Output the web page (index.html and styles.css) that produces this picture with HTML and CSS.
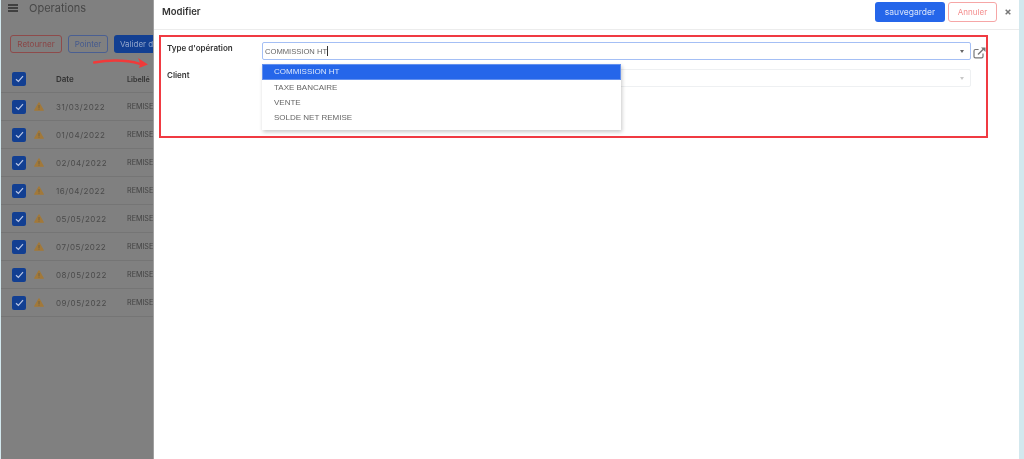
FILE: index.html
```html
<!DOCTYPE html>
<html lang="fr">
<head>
<meta charset="utf-8">
<title>Operations</title>
<link rel="stylesheet" href="styles.css">
</head>
<body>
<div class="page">
  <section class="backdrop">
    <header class="top">
      <svg class="burger" width="10" height="8" viewBox="0 0 10 8"><path d="M0 1h10M0 4h10M0 7h10" stroke="#2b2b2b" stroke-width="1.4"/></svg>
      <span class="top-title">Operations</span>
    </header>
    <div class="actions">
      <span class="btn btn-red">Retourner</span>
      <span class="btn btn-blue">Pointer</span>
      <span class="btn btn-solid">Valider d</span>
    </div>
    <div class="row row-head">
      <span class="check"><svg width="9" height="8" viewBox="0 0 9 8"><path d="M1 4.2l2.4 2.3L8 1.2" fill="none" stroke="#b9c6e6" stroke-width="1.2"/></svg></span>
      <span class="warn-slot"></span>
      <span class="date">Date</span>
      <span class="label">Libellé</span>
    </div>
    <div class="row">
      <span class="check"><svg width="9" height="8" viewBox="0 0 9 8"><path d="M1 4.2l2.4 2.3L8 1.2" fill="none" stroke="#b9c6e6" stroke-width="1.2"/></svg></span>
      <span class="warn-slot"><svg class="warn" width="10" height="9" viewBox="0 0 10 9"><path d="M5 .8L9.300 8.200H.7z" fill="#a2793a" stroke="#a2793a" stroke-width="1.200" stroke-linejoin="round"/><path d="M5 3v3M5 6.600v1" stroke="#6b5e44" stroke-width=".9"/></svg></span>
      <span class="date">31/03/2022</span><span class="label">REMISE</span>
    </div>
    <div class="row">
      <span class="check"><svg width="9" height="8" viewBox="0 0 9 8"><path d="M1 4.2l2.4 2.3L8 1.2" fill="none" stroke="#b9c6e6" stroke-width="1.2"/></svg></span>
      <span class="warn-slot"><svg class="warn" width="10" height="9" viewBox="0 0 10 9"><path d="M5 .8L9.300 8.200H.7z" fill="#a2793a" stroke="#a2793a" stroke-width="1.200" stroke-linejoin="round"/><path d="M5 3v3M5 6.600v1" stroke="#6b5e44" stroke-width=".9"/></svg></span>
      <span class="date">01/04/2022</span><span class="label">REMISE</span>
    </div>
    <div class="row">
      <span class="check"><svg width="9" height="8" viewBox="0 0 9 8"><path d="M1 4.2l2.4 2.3L8 1.2" fill="none" stroke="#b9c6e6" stroke-width="1.2"/></svg></span>
      <span class="warn-slot"><svg class="warn" width="10" height="9" viewBox="0 0 10 9"><path d="M5 .8L9.300 8.200H.7z" fill="#a2793a" stroke="#a2793a" stroke-width="1.200" stroke-linejoin="round"/><path d="M5 3v3M5 6.600v1" stroke="#6b5e44" stroke-width=".9"/></svg></span>
      <span class="date">02/04/2022</span><span class="label">REMISE</span>
    </div>
    <div class="row">
      <span class="check"><svg width="9" height="8" viewBox="0 0 9 8"><path d="M1 4.2l2.4 2.3L8 1.2" fill="none" stroke="#b9c6e6" stroke-width="1.2"/></svg></span>
      <span class="warn-slot"><svg class="warn" width="10" height="9" viewBox="0 0 10 9"><path d="M5 .8L9.300 8.200H.7z" fill="#a2793a" stroke="#a2793a" stroke-width="1.200" stroke-linejoin="round"/><path d="M5 3v3M5 6.600v1" stroke="#6b5e44" stroke-width=".9"/></svg></span>
      <span class="date">16/04/2022</span><span class="label">REMISE</span>
    </div>
    <div class="row">
      <span class="check"><svg width="9" height="8" viewBox="0 0 9 8"><path d="M1 4.2l2.4 2.3L8 1.2" fill="none" stroke="#b9c6e6" stroke-width="1.2"/></svg></span>
      <span class="warn-slot"><svg class="warn" width="10" height="9" viewBox="0 0 10 9"><path d="M5 .8L9.300 8.200H.7z" fill="#a2793a" stroke="#a2793a" stroke-width="1.200" stroke-linejoin="round"/><path d="M5 3v3M5 6.600v1" stroke="#6b5e44" stroke-width=".9"/></svg></span>
      <span class="date">05/05/2022</span><span class="label">REMISE</span>
    </div>
    <div class="row">
      <span class="check"><svg width="9" height="8" viewBox="0 0 9 8"><path d="M1 4.2l2.4 2.3L8 1.2" fill="none" stroke="#b9c6e6" stroke-width="1.2"/></svg></span>
      <span class="warn-slot"><svg class="warn" width="10" height="9" viewBox="0 0 10 9"><path d="M5 .8L9.300 8.200H.7z" fill="#a2793a" stroke="#a2793a" stroke-width="1.200" stroke-linejoin="round"/><path d="M5 3v3M5 6.600v1" stroke="#6b5e44" stroke-width=".9"/></svg></span>
      <span class="date">07/05/2022</span><span class="label">REMISE</span>
    </div>
    <div class="row">
      <span class="check"><svg width="9" height="8" viewBox="0 0 9 8"><path d="M1 4.2l2.4 2.3L8 1.2" fill="none" stroke="#b9c6e6" stroke-width="1.2"/></svg></span>
      <span class="warn-slot"><svg class="warn" width="10" height="9" viewBox="0 0 10 9"><path d="M5 .8L9.300 8.200H.7z" fill="#a2793a" stroke="#a2793a" stroke-width="1.200" stroke-linejoin="round"/><path d="M5 3v3M5 6.600v1" stroke="#6b5e44" stroke-width=".9"/></svg></span>
      <span class="date">08/05/2022</span><span class="label">REMISE</span>
    </div>
    <div class="row">
      <span class="check"><svg width="9" height="8" viewBox="0 0 9 8"><path d="M1 4.2l2.4 2.3L8 1.2" fill="none" stroke="#b9c6e6" stroke-width="1.2"/></svg></span>
      <span class="warn-slot"><svg class="warn" width="10" height="9" viewBox="0 0 10 9"><path d="M5 .8L9.300 8.200H.7z" fill="#a2793a" stroke="#a2793a" stroke-width="1.200" stroke-linejoin="round"/><path d="M5 3v3M5 6.600v1" stroke="#6b5e44" stroke-width=".9"/></svg></span>
      <span class="date">09/05/2022</span><span class="label">REMISE</span>
    </div>
  </section>

  <section class="drawer">
    <header class="drawer-head">
      <h1 class="drawer-title">Modifier</h1>
      <span class="save">sauvegarder</span>
      <span class="cancel">Annuler</span>
      <svg class="close" width="6" height="6" viewBox="0 0 6 6"><path d="M.7.7l4.600 4.600M5.300.7L.7 5.300" stroke="#777" stroke-width="1.500"/></svg>
    </header>
    <div class="highlight">
      <div class="form-labels">
        <div class="form-label">Type d'opération</div>
        <div class="form-label">Client</div>
      </div>
      <div class="form-fields">
        <div class="field-line">
          <div class="select select-open">
            <span class="select-text">COMMISSION HT</span><span class="caret-bar"></span>
            <span class="arrow"></span>
          </div>
          <svg class="ext" width="13" height="12" viewBox="0 0 13 12"><path d="M10 6.500v3a1.400 1.400 0 0 1-1.400 1.400H2.400A1.400 1.400 0 0 1 1 9.500V3.900A1.400 1.400 0 0 1 2.400 2.500h3.200" fill="none" stroke="#777" stroke-width="1.200"/><path d="M5 7.500L10.500 2" stroke="#777" stroke-width="1.400"/><path d="M8 .5h4.500V5z" fill="#777"/></svg>
        </div>
        <div class="field-line">
          <div class="select select-idle"><span class="arrow arrow-idle"></span></div>
        </div>
        <ul class="menu">
          <li class="menu-item menu-active">COMMISSION HT</li>
          <li class="menu-item">TAXE BANCAIRE</li>
          <li class="menu-item">VENTE</li>
          <li class="menu-item">SOLDE NET REMISE</li>
        </ul>
      </div>
    </div>
  </section>

  <svg class="swoosh" width="56" height="13" viewBox="0 0 56 13"><path d="M1 5.500C15 3 30 2 47 6.800" fill="none" stroke="#f03a3a" stroke-width="2.400" stroke-linecap="round"/><path d="M45 1L55 7.500L46 11C47.500 8 47 4 45 1Z" fill="#f03a3a"/></svg>
</div>
</body>
</html>
```
FILE: styles.css
```css
* { box-sizing: border-box; }
html, body { margin: 0; height: 100%; overflow: hidden; }
body { font-family: "Inter", "Liberation Sans", sans-serif; background: #d3e8ee; }
.page { position: relative; display: flex; width: 1024px; height: 459px; padding: 0 5px 0 1px; filter: blur(.35px); }

.backdrop { width: 153px; background: #808080; color: #3d3d3d; overflow: hidden; flex: none; border-right: 1px solid #a0a0a0; }
.top { display: flex; align-items: center; height: 16px; padding-left: 7px; gap: 11px; }
.top-title { font-size: 11px; color: #474747; white-space: nowrap; }
.actions { display: flex; gap: 6px; padding: 19px 0 0 9px; height: 54px; white-space: nowrap; }
.btn { flex: none; display: flex; align-items: center; justify-content: center; height: 18px; border-radius: 3px; font-size: 8px; padding: 0 6px; }
.btn-red { width: 52px; border: 1px solid #8e4b4b; color: #8a4444; }
.btn-blue { width: 40px; border: 1px solid #4a5f92; color: #43598e; }
.btn-solid { width: 60px; justify-content: flex-start; background: #123f92; color: #93a6cb; }

.row { display: flex; align-items: center; height: 28px; border-bottom: 1px solid #757575; font-size: 8px; white-space: nowrap; }
.row-head { height: 23px; padding-bottom: 4px; font-weight: 600; color: #333; }
.check { flex: none; display: flex; align-items: center; justify-content: center; width: 14px; height: 14px; margin-left: 11px; border-radius: 2px; background: #123f92; }
.warn-slot { flex: none; display: flex; justify-content: center; width: 10px; margin-left: 8px; }
.warn { display: block; flex: none; }
.date { flex: none; width: 71px; margin-left: 12px; font-size: 8px; letter-spacing: .55px; color: #4a4a4a; }
.row-head .date { letter-spacing: 0; }
.row-head .date, .row-head .label { color: #333; }
.label { font-size: 7.200px; color: #424242; }

.drawer { flex: 1; background: #fff; min-width: 0; }
.drawer-head { display: flex; align-items: center; height: 30px; padding: 0 8px 6px 8px; border-bottom: 1px solid #ececec; }
.drawer-title { flex: 1; margin: 0; font-size: 9.500px; font-weight: 600; color: #333; }
.save { display: flex; align-items: center; justify-content: center; width: 70px; height: 20px; background: #2566ea; border-radius: 3px; color: #d9e5fb; font-size: 8.500px; }
.cancel { display: flex; align-items: center; justify-content: center; width: 49px; height: 20px; margin-left: 3px; border: 1px solid #f6a6a6; border-radius: 3px; color: #f48c8c; font-size: 8px; }
.close { margin-left: 8px; }

.highlight { display: flex; width: 829px; height: 103px; margin: 5px 0 0 5px; padding: 5px 0 0 6px; border: 2px solid #f03a42; }
.form-labels { flex: none; width: 95px; font-size: 8px; font-weight: 600; color: #333; }
.form-label { height: 27px; padding-top: 1px; }
.form-fields { position: relative; width: 709px; }
.field-line { display: flex; align-items: flex-start; height: 27px; }
.select { position: relative; display: flex; align-items: center; width: 709px; height: 18px; flex: none; border-radius: 2px; background: #fff; font-family: "Liberation Sans", sans-serif; font-size: 7.600px; color: #666; padding-left: 2px; }
.select-open { border: 1px solid #a4bff5; }
.select-idle { border: 1px solid #eef0f2; }
.select-text { white-space: nowrap; }
.caret-bar { width: 1px; height: 10px; background: #333; }
.arrow { position: absolute; right: 6px; top: 7px; width: 0; height: 0; border: 2px solid transparent; border-top: 3px solid #666; border-bottom: 0; }
.arrow-idle { border-top-color: #c8c8c8; }
.ext { flex: none; margin: 5px 0 0 2px; }
.menu { position: absolute; top: 22px; left: 0; width: 359px; margin: 0; padding: 0 0 5px; list-style: none; background: #fff; box-shadow: 1px 2px 4px rgba(0,0,0,.22); font-family: "Liberation Sans", sans-serif; font-size: 8px; color: #666; }
.menu-item { display: flex; align-items: center; height: 15px; padding-left: 12px; }
.menu-active { height: 16px; padding-bottom: 1px; background: #2566ea; border: 1px solid #6390ee; color: #dbe6fb; padding-left: 11px; }

.swoosh { position: absolute; left: 93px; top: 57px; }
```
